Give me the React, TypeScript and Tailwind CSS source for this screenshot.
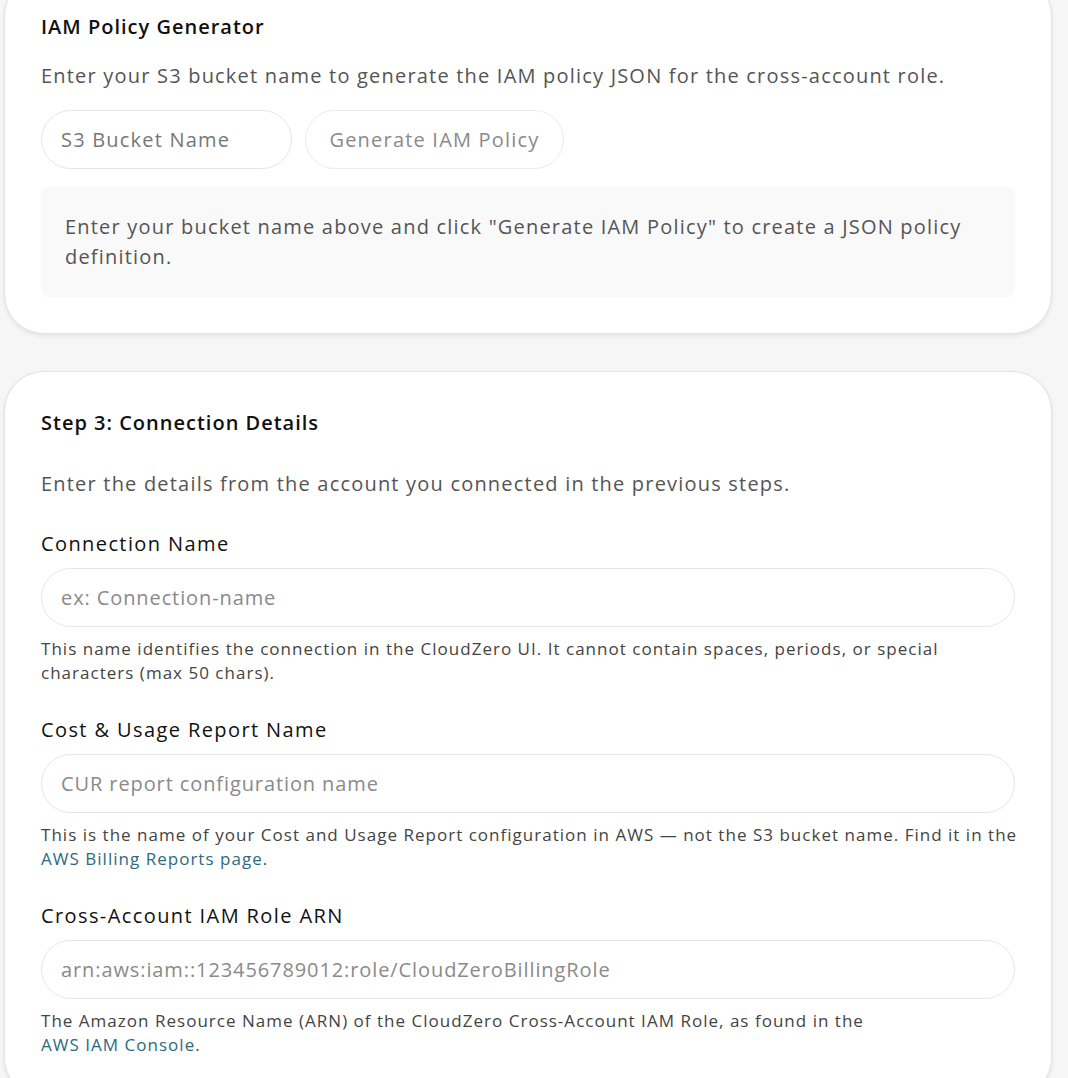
const font = { fontFamily: '"Open Sans", "Liberation Sans", sans-serif' };

function Field({
  label,
  placeholder,
  children,
}: {
  label: string;
  placeholder: string;
  children: React.ReactNode;
}) {
  return (
    <div className="flex flex-col">
      <label className="text-[20px] leading-[28px] font-medium tracking-[0.07em] text-[#111]">{label}</label>
      <input
        placeholder={placeholder}
        className="mt-[10px] h-[59px] w-full rounded-full border border-[#e6e6e6] bg-white px-[19px] text-[20px] tracking-[0.045em] text-[#333] placeholder:text-[#8a8a8a] outline-none"
      />
      <p className="mt-[10px] whitespace-nowrap text-[17px] leading-[24px] tracking-[0.06em] text-[#444]">{children}</p>
    </div>
  );
}

export default function App() {
  return (
    <div className="min-h-screen bg-[#f6f6f6] px-[4px] pr-[16px] pb-10" style={font}>
      {/* IAM policy card (top cut off by scroll) */}
      <div className="-mt-[24px] rounded-[40px] border border-[#e3e3e3] bg-white px-[36px] pt-[36px] pb-[36px] shadow-[0_2px_4px_rgba(0,0,0,0.08)]">
        <h2 className="text-[20px] leading-[28px] font-semibold tracking-[0.05em] text-[#111]">IAM Policy Generator</h2>
        <p className="mt-[21px] text-[20px] leading-[28px] tracking-[0.06em] text-[#555]">
          Enter your S3 bucket name to generate the IAM policy JSON for the cross-account role.
        </p>
        <div className="mt-[20px] flex gap-[13px]">
          <input
            placeholder="S3 Bucket Name"
            className="h-[59px] w-[251px] rounded-full border border-[#e6e6e6] bg-white px-[19px] text-[20px] tracking-[0.06em] placeholder:text-[#777] outline-none"
          />
          <button className="h-[59px] w-[259px] rounded-full border border-[#ececec] bg-white text-[20px] tracking-[0.06em] text-[#8a8a8a]">
            Generate IAM Policy
          </button>
        </div>
        <div className="mt-[18px] rounded-[8px] bg-[#f9f9f9] px-[24px] py-[25px] text-[20px] leading-[30px] tracking-[0.06em] text-[#555]">
          Enter your bucket name above and click "Generate IAM Policy" to create a JSON policy
          <br />
          definition.
        </div>
      </div>

      {/* Step 3 card */}
      <div className="mt-[37px] rounded-[40px] border border-[#e3e3e3] bg-white px-[36px] pt-[37px] pb-[40px] shadow-[0_2px_4px_rgba(0,0,0,0.08)]">
        <h2 className="text-[20px] leading-[28px] font-semibold tracking-[0.05em] text-[#111]">Step 3: Connection Details</h2>
        <p className="mt-[33px] text-[20px] leading-[28px] tracking-[0.06em] text-[#555]">
          Enter the details from the account you connected in the previous steps.
        </p>
        <div className="mt-[32px] flex flex-col gap-[31px]">
          <Field label="Connection Name" placeholder="ex: Connection-name">
            This name identifies the connection in the CloudZero UI. It cannot contain spaces, periods, or special
            <br />
            characters (max 50 chars).
          </Field>
          <Field label="Cost & Usage Report Name" placeholder="CUR report configuration name">
            This is the name of your Cost and Usage Report configuration in AWS — not the S3 bucket name. Find it in the
            <br />
            <a className="text-[#2c6a82]">AWS Billing Reports page</a>.
          </Field>
          <Field label="Cross-Account IAM Role ARN" placeholder="arn:aws:iam::123456789012:role/CloudZeroBillingRole">
            The Amazon Resource Name (ARN) of the CloudZero Cross-Account IAM Role, as found in the
            <br />
            <a className="text-[#2c6a82]">AWS IAM Console</a>.
          </Field>
        </div>
      </div>
    </div>
  );
}
